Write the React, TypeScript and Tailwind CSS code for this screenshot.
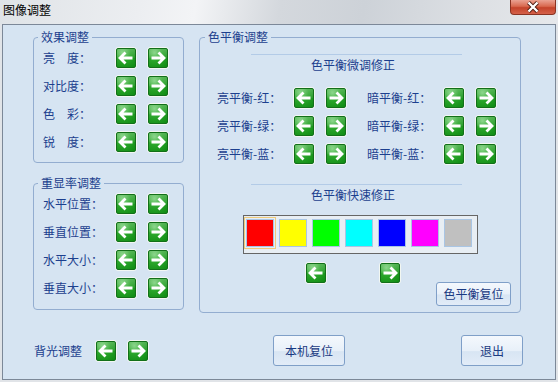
import type { ReactNode } from 'react'

const effects = ['亮　度：', '对比度：', '色　彩：', '锐　度：']
const display = ['水平位置：', '垂直位置：', '水平大小：', '垂直大小：']
const balance = [
	['亮平衡-红：', '暗平衡-红：'],
	['亮平衡-绿：', '暗平衡-绿：'],
	['亮平衡-蓝：', '暗平衡-蓝：'],
]
const swatches = ['#ff0000', '#ffff00', '#00ff00', '#00ffff', '#0000ff', '#ff00ff', '#c0c0c0']

function ArrowBtn({ dir }: { dir: 'left' | 'right' }) {
	return (
		<button type="button" className="block h-[22px] w-[22px] shrink-0 rounded-[3px] border border-[#f2f7f2] p-0">
			<span className="flex h-full w-full items-center justify-center rounded-[2px] border border-[#13701a] bg-[linear-gradient(180deg,rgba(255,255,255,0.22),rgba(255,255,255,0.06)_48%,rgba(0,0,0,0)_52%),radial-gradient(circle_at_30%_22%,#78d078_0%,#2aa52a_42%,#0e8a12_100%)]">
				<svg width="18" height="18" viewBox="0 0 18 18">
					{dir === 'left' ? (
						<path d="M15.5 9H3.5M8.5 3.5L3 9l5.5 5.5" fill="none" stroke="#fff" strokeWidth="2.8" />
					) : (
						<path d="M2.5 9h12M9.5 3.5L15 9l-5.5 5.5" fill="none" stroke="#fff" strokeWidth="2.8" />
					)}
				</svg>
			</span>
		</button>
	)
}

function Group({ title, className, legend = 'ml-[-5px]', children }: { title: string; className: string; legend?: string; children: ReactNode }) {
	return (
		<fieldset className={`rounded-[4px] border border-[#93add0] ${className}`}>
			<legend className={`${legend} px-[3px] leading-[16px]`}>{title}</legend>
			{children}
		</fieldset>
	)
}

function Row({ label, width }: { label: string; width: string }) {
	return (
		<div className="flex h-[22px] items-center gap-[10px]">
			<span className={`${width} -mr-[10px] leading-[16px]`}>{label}</span>
			<ArrowBtn dir="left" />
			<ArrowBtn dir="right" />
		</div>
	)
}

function BlueButton({ text, className }: { text: string; className: string }) {
	return (
		<button
			type="button"
			className={`rounded-[3px] border border-[#7f9fc8] bg-[linear-gradient(180deg,#f4f8fd_0%,#e8f0f9_50%,#d8e5f3_54%,#e2ecf8_100%)] text-[12px] text-[#1a3a82] ${className}`}
		>
			{text}
		</button>
	)
}

export default function App() {
	return (
		<div className="flex h-[382px] w-[558px] flex-col bg-[#e1e4e8] font-['Noto_Sans_CJK_SC','Liberation_Sans',sans-serif] text-[12px] text-[#1c3f8e]">
			<div className="flex h-[24px] shrink-0 items-start bg-[linear-gradient(100deg,#dfe3e7_0%,#eceef1_25%,#f3f4f6_35%,#d4d8dd_50%,#cdd2d8_65%,#dde0e4_85%,#e6e8eb_100%)]">
				<span className="pl-[3px] pt-[2px] leading-[16px] text-black">图像调整</span>
				<span className="ml-auto mr-[2px] flex h-[15px] w-[46px] items-center justify-center rounded-b-[4px] border border-t-0 border-[#8a3322] bg-[linear-gradient(180deg,#eaa292_0%,#d9694f_45%,#c4432a_55%,#d5614a_100%)]">
					<svg width="14" height="12" viewBox="0 0 14 12">
						<path d="M2.5 1.5l9 9M11.5 1.5l-9 9" stroke="#4a1a12" strokeWidth="4" />
						<path d="M2.5 1.5l9 9M11.5 1.5l-9 9" stroke="#fff" strokeWidth="2.4" />
					</svg>
				</span>
			</div>

			<div className="mx-[2px] flex h-[356px] flex-col border border-[#7c8898] bg-[#d6e4f2] pl-[30px] pt-[4px]">
				<div className="flex items-start gap-[15px]">
					<div className="flex w-[151px] flex-col">
						<Group title="效果调整" className="pb-[9px] pl-[9px]">
							<div className="flex flex-col gap-[6px] pt-[2px]">
								{effects.map((l) => (
									<Row key={l} label={l} width="w-[72px]" />
								))}
							</div>
						</Group>
						<Group title="重显率调整" className="mt-[12px] pb-[10px] pl-[9px]">
							<div className="flex flex-col gap-[6px] pt-[2px]">
								{display.map((l) => (
									<Row key={l} label={l} width="w-[72px]" />
								))}
							</div>
						</Group>
					</div>

					<Group title="色平衡调整" legend="ml-[5px]" className="w-[322px] pb-[6px]">
						<div className="ml-[51px] mt-[9px] w-[211px] border-t border-[#b3cbe7]" />
						<div className="ml-[51px] mt-[2px] w-[204px] text-center leading-[16px]">色平衡微调修正</div>
						<div className="mt-[14px] flex flex-col gap-[6px] pl-[17px]">
							{balance.map(([a, b]) => (
								<div key={a} className="flex gap-[20px]">
									<Row label={a} width="w-[76px]" />
									<Row label={b} width="w-[76px]" />
								</div>
							))}
						</div>
						<div className="ml-[51px] mt-[19px] w-[211px] border-t border-[#b3cbe7]" />
						<div className="ml-[51px] mt-[2px] w-[204px] text-center leading-[16px]">色平衡快速修正</div>
						<div className="mx-auto mt-[12px] flex h-[39px] w-[235px] gap-[5px] border border-[#666] bg-[#e8eef4] pl-[2px] pt-[3px]">
							{swatches.map((c, i) => (
								<span
									key={c}
									className={`h-[28px] w-[28px] border border-[#a9c5e4] ${i === 0 ? 'outline outline-1 outline-offset-[1px] outline-[#efcb7c]' : ''}`}
									style={{ backgroundColor: c }}
								/>
							))}
						</div>
						<div className="mt-[8px] flex items-start">
							<span className="ml-[105px]">
								<ArrowBtn dir="left" />
							</span>
							<span className="ml-[52px]">
								<ArrowBtn dir="right" />
							</span>
							<BlueButton text="色平衡复位" className="ml-auto mr-[9px] mt-[20px] h-[24px] w-[75px]" />
						</div>
					</Group>
				</div>

				<div className="mt-[22px] flex h-[31px] items-center">
					<span className="ml-[1px] w-[61px] leading-[16px]">背光调整</span>
					<ArrowBtn dir="left" />
					<span className="ml-[10px]">
						<ArrowBtn dir="right" />
					</span>
					<BlueButton text="本机复位" className="ml-[124px] h-[31px] w-[72px]" />
					<BlueButton text="退出" className="ml-[116px] h-[31px] w-[62px]" />
				</div>
			</div>
		</div>
	)
}
